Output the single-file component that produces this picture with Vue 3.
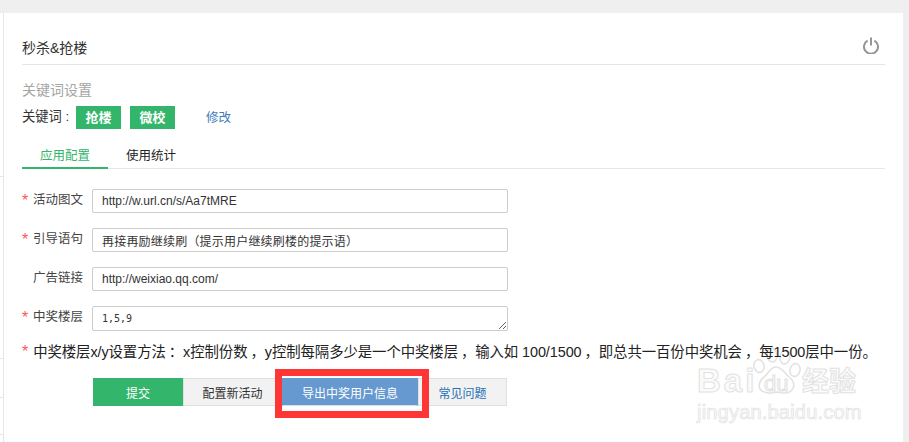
<script setup>
const fields = [
  { label: '活动图文', req: true, value: 'http://w.url.cn/s/Aa7tMRE' },
  { label: '引导语句', req: true, value: '再接再励继续刷（提示用户继续刷楼的提示语）', cjk: true },
  { label: '广告链接', req: false, value: 'http://weixiao.qq.com/' }
]
</script>

<template>
  <div class="page">
    <div class="edge">
      <div class="tick t1"></div>
      <div class="tick t2"></div>
      <div class="tick t3"></div>
      <div class="tick t4"></div>
    </div>
    <div class="panel">
      <div class="head">
        <span class="title">秒杀&amp;抢楼</span>
        <svg class="power" width="16" height="17" viewBox="0 0 16 17" fill="none" stroke="#959595" stroke-width="2">
          <path d="M4.6 3.6a7 7 0 1 0 6.8 0" />
          <path d="M8 0.5v8" />
        </svg>
      </div>
      <div class="sub">关键词设置</div>
      <div class="keys">
        <span class="klabel">关键词 :</span>
        <span class="tag">抢楼</span>
        <span class="tag">微校</span>
        <a class="edit">修改</a>
      </div>
      <div class="tabs">
        <span class="tab active">应用配置</span>
        <span class="tab">使用统计</span>
      </div>
      <form class="form" @submit.prevent>
        <div v-for="f in fields" :key="f.label" class="row">
          <label class="label"><i v-if="f.req">*</i>{{ f.label }}</label>
          <input class="input" :class="{ cjk: f.cjk }" :value="f.value" />
        </div>
        <div class="row">
          <label class="label"><i>*</i>中奖楼层</label>
          <textarea class="input area" rows="1">1,5,9</textarea>
        </div>
        <p class="note"><i>*</i>中奖楼层x/y设置方法<span class="p">：</span>x控制份数<span class="p">，</span>y控制每隔多少是一个中奖楼层<span class="p">，</span>输入如 100/1500<span class="p">，</span>即总共一百份中奖机会<span class="p">，</span>每1500层中一份。</p>
        <div class="actions">
          <button class="btn green">提交</button>
          <button class="btn config">配置新活动</button>
          <button class="btn blue">导出中奖用户信息</button>
          <button class="btn link">常见问题</button>
          <div class="frame"></div>
        </div>
      </form>
    </div>
    <div class="wm" aria-hidden="true">
      <span class="bai">Bai</span>
      <svg class="paw" width="50" height="52" viewBox="0 0 50 52" fill="none" stroke="#e2e2e2" stroke-width="1.6">
        <ellipse cx="7" cy="21" rx="5" ry="6.5" transform="rotate(-15 7 21)" />
        <ellipse cx="20" cy="10" rx="5" ry="7" transform="rotate(-8 20 10)" />
        <ellipse cx="33" cy="12" rx="5" ry="7" transform="rotate(10 33 12)" />
        <ellipse cx="43" cy="25" rx="5" ry="6.5" transform="rotate(15 43 25)" />
        <path d="M24 22c5 0 8 5 12 9 5 4 7 8 5 12-2 5-8 6-16 4-7 2-14 1-17-3-2-4 0-9 4-12 5-4 6-10 12-10z" />
      </svg>
      <span class="du">du</span>
      <span class="jy">经验</span>
      <span class="url">jingyan.baidu.com</span>
    </div>
  </div>
</template>

<style scoped>
.page {
  position: relative;
  display: flex;
  width: 909px;
  height: 442px;
  overflow: hidden;
  box-sizing: border-box;
  background: #efefef;
  padding: 13px 6px 0 0;
  font-family: "Liberation Sans", "Noto Sans CJK SC", sans-serif;
  font-size: 12px;
  color: #333;
}
.edge {
  position: relative;
  flex: none;
  width: 4px;
  box-sizing: border-box;
  background: #fff;
  border-right: 1px solid #e6e6ea;
}
.tick { position: absolute; left: 0; width: 3px; height: 1px; background: #e6e6ea; }
.t1 { top: 163px; }
.t2 { top: 345px; }
.t3 { top: 384px; }
.t4 { top: 421px; }
.panel {
  flex: 1;
  background: #fff;
  height: 429px;
  padding: 0 18px;
  box-sizing: border-box;
}
.head {
  height: 52px;
  border-bottom: 1px solid #e3e3e8;
  display: flex;
  align-items: center;
  justify-content: space-between;
  padding-top: 16px;
  box-sizing: border-box;
  font-size: 14px;
}
.power { margin-right: 6px; margin-top: -2px; }
.sub { color: #a5a5a5; font-size: 14px; margin-top: 15px; line-height: 20px; }
.keys { display: flex; align-items: center; height: 23px; margin-top: 6px; font-size: 13.3px; }
.klabel { width: 54px; line-height: 22px; height: 23px; white-space: nowrap; }
.tag {
  width: 45px; height: 23px; line-height: 23px; background: #33b56b; color: #fff; text-align: center;
  margin-right: 9px; font-weight: 700; font-size: 13px;
}
.edit { color: #3f7dbb; margin-left: 22px; line-height: 24px; height: 23px; font-size: 12.5px; }
.tabs { display: flex; margin-top: 15px; border-bottom: 1px solid #e6e6e6; height: 25px; box-sizing: border-box; font-size: 12.5px; }
.tab { padding: 0 18px; height: 24px; line-height: 24px; width: 86px; box-sizing: border-box; color: #222; }
.tab.active { color: #33b56b; border-bottom: 2px solid #33b56b; height: 25px; }
.form { margin-top: 20px; }
.row { display: flex; margin-bottom: 15px; height: 24px; }
.label { width: 70px; font-size: 12.5px; padding-left: 11px; box-sizing: border-box; position: relative; line-height: 22px; color: #444; }
i { font-style: normal; color: #f55; }
.label i { position: absolute; left: 0; top: 1px; font-size: 16px; }
.input {
  width: 416px; height: 24px; box-sizing: border-box; border: 1px solid #ccc; border-radius: 2px; padding: 0 9px;
  font: 12px "Liberation Sans", "Noto Sans CJK SC", sans-serif; color: #333; outline: none; background: #fff;
}
.input.cjk { letter-spacing: 0.2px; }
.area { height: 25px; font-family: "DejaVu Sans Mono", monospace; font-size: 10px; line-height: 14px; padding-top: 5px; padding-bottom: 0; resize: vertical; overflow: hidden; }
.note { position: relative; z-index: 1; margin: -3px 0 0; font-size: 14.4px; line-height: 20px; color: #222; white-space: nowrap; letter-spacing: -0.08px; }
.note i { font-size: 16px; line-height: 0; margin-right: 5px; }
.p { padding-left: 3px; }
.actions { position: relative; display: flex; align-items: center; margin-left: 71px; margin-top: 16px; height: 28px; }
.btn {
  height: 28px; box-sizing: border-box; border: 1px solid #e0e0e0; background: #f2f2f2; color: #333; font: 12px "Liberation Sans", "Noto Sans CJK SC", sans-serif; padding: 0; flex: none;
}
.btn.green { width: 90px; background: #33b56b; border-color: #33b56b; color: #fff; }
.btn.config { width: 99px; }
.btn.blue { width: 136px; background: #6699cf; border-color: #6699cf; border-bottom-color: #dcdcdc; color: #fff; }
.btn.link { width: 89px; color: #1f6fb5; }
.frame { position: absolute; left: 182px; top: -9px; width: 154px; height: 49px; box-sizing: border-box; border: 7px solid #ff3636; pointer-events: none; }
.wm { position: absolute; left: 0; top: 0; width: 909px; height: 442px; pointer-events: none; }
.bai, .du, .jy, .url { position: absolute; color: #fbfbfb; -webkit-text-stroke: 1px #e2e2e2; white-space: nowrap; font-family: "Liberation Sans", "Noto Sans CJK SC", sans-serif; }
.bai { left: 697px; top: 362px; font-size: 33px; line-height: 38px; font-weight: 700; letter-spacing: 3px; }
.paw { position: absolute; left: 752px; top: 345px; }
.du { left: 764px; top: 371px; font-size: 22px; line-height: 26px; }
.jy { left: 802px; top: 364px; font-size: 27px; line-height: 36px; font-weight: 700; }
.url { left: 697px; top: 400px; font-size: 20px; line-height: 24px; -webkit-text-stroke: 0.7px #e2e2e2; letter-spacing: 0.2px; }
</style>
